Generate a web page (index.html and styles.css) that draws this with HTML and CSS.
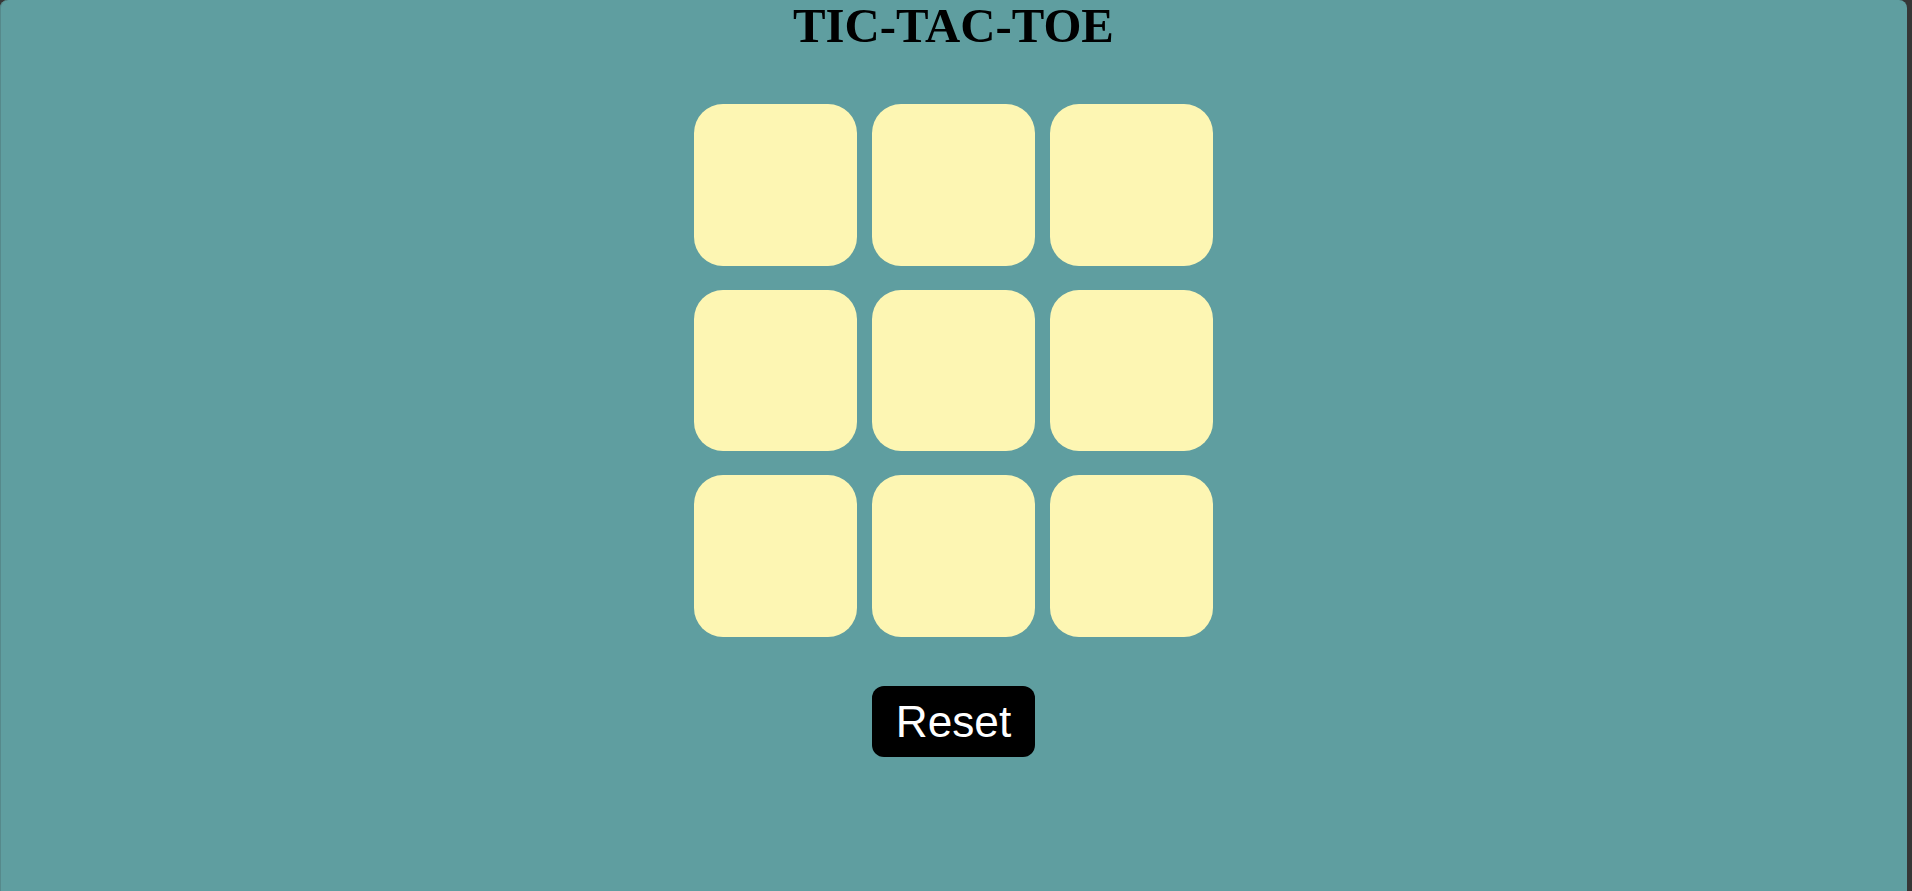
FILE: index.html
```html
<!DOCTYPE html>
<html lang="en">
<head>
<meta charset="UTF-8">
<title>Tic-Tac-Toe</title>
<link rel="stylesheet" href="styles.css">
</head>
<body>
<main class="app">
  <h1 class="title">TIC-TAC-TOE</h1>
  <div class="board">
    <button class="box"></button>
    <button class="box"></button>
    <button class="box"></button>
    <button class="box"></button>
    <button class="box"></button>
    <button class="box"></button>
    <button class="box"></button>
    <button class="box"></button>
    <button class="box"></button>
  </div>
  <button class="reset">Reset</button>
</main>
</body>
</html>
```
FILE: styles.css
```css
html, body {
  margin: 0;
  padding: 0;
  height: 100%;
}

body {
  background: #363636;
  overflow: hidden;
}

.app {
  box-sizing: border-box;
  width: calc(100% - 5px);
  height: 100vh;
  background: #5f9ea0;
  border-radius: 8px 8px 0 0;
  box-shadow: inset 1px 0 0 #56898b;
  display: flex;
  flex-direction: column;
  align-items: center;
}

.title {
  margin: 0;
  font-family: "Liberation Serif", "Times New Roman", serif;
  font-weight: bold;
  font-size: 48.8px;
  line-height: 53px;
  color: #000;
}

.board {
  margin-top: 51px;
  display: grid;
  grid-template-columns: repeat(3, 163px);
  grid-template-rows: repeat(3, 161.5px);
  column-gap: 15px;
  row-gap: 24px;
}

.box {
  border: none;
  padding: 0;
  border-radius: 29px;
  background: #fdf6b3;
}

.reset {
  margin-top: 49.5px;
  width: 163px;
  height: 71px;
  border: none;
  border-radius: 12px;
  background: #000;
  color: #fff;
  font-family: "Liberation Sans", Arial, sans-serif;
  font-size: 44.2px;
  padding: 0;
}
```
